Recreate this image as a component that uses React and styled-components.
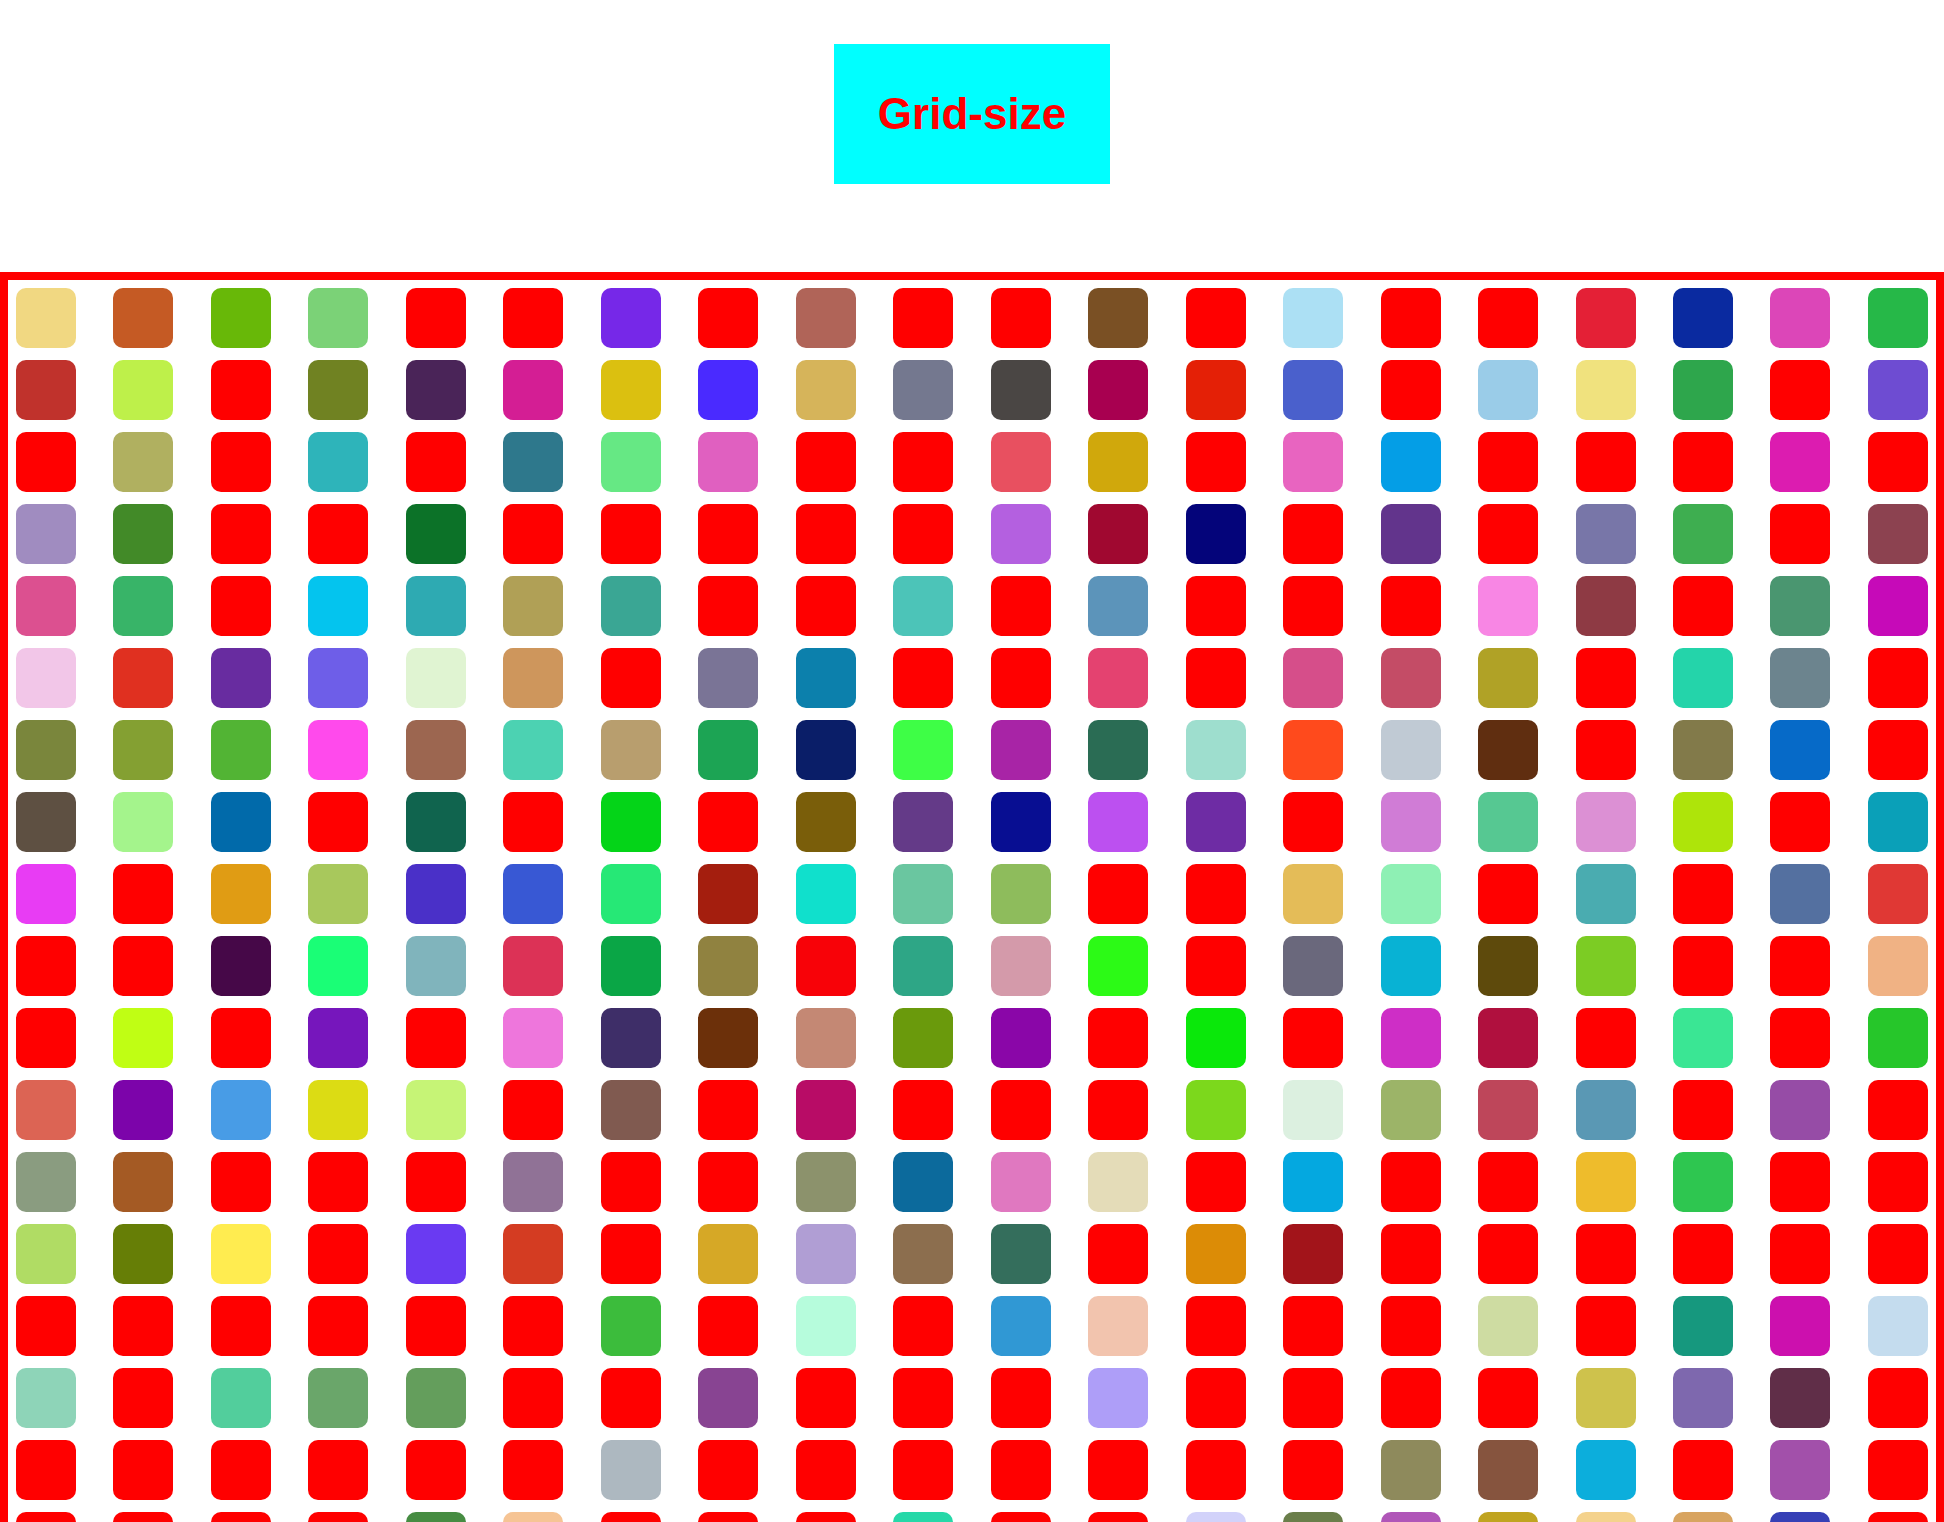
import React from "react";
import styled, { createGlobalStyle } from "styled-components";

const GlobalStyle = createGlobalStyle`
  html, body {
    margin: 0;
    padding: 0;
    background: #ffffff;
    font-family: "Liberation Sans", Arial, sans-serif;
  }
  * { box-sizing: border-box; }
`;

const R = "#ff0000";

const ROWS = [
  ["#f1d882", "#c55a24", "#68b808", "#7bd277", R, R, "#7628e8", R, "#b06458", R, R, "#7a5024", R, "#ace0f4", R, R, "#e42036", "#0a2aa0", "#dc46b8", "#26b848"],
  ["#c0322c", "#bef04a", R, "#708222", "#4a2458", "#d41e94", "#dbc010", "#4a2aff", "#d6b45a", "#74788f", "#4a4644", "#a80050", "#e42006", "#4a60cc", R, "#9acce8", "#f0e27e", "#2ea64c", R, "#6e4cd2"],
  [R, "#b0b060", R, "#2eb4ba", R, "#2e788c", "#66e884", "#e060c0", R, R, "#e85060", "#d0a80c", R, "#e864c0", "#049ee6", R, R, R, "#dc1cb0", R],
  ["#a08cc0", "#428a28", R, R, "#0c7228", R, R, R, R, R, "#b460e0", "#a00830", "#04047a", R, "#62348c", R, "#7876a8", "#3eae50", R, "#8c4250"],
  ["#dc5090", "#38b468", R, "#04c4ee", "#2eaab2", "#b0a056", "#3aa694", R, R, "#4cc4b8", R, "#5c94ba", R, R, R, "#f886e4", "#8e3a44", R, "#4a9670", "#c60ab8"],
  ["#f2c6e8", "#e03020", "#682ca0", "#6e5ee8", "#e0f4d2", "#ce965c", R, "#7a7496", "#0c80ac", R, R, "#e44270", R, "#d64e8a", "#c44c66", "#b0a226", R, "#24d4aa", "#6c848e", R],
  ["#7a863c", "#84a032", "#52b434", "#ff4aec", "#9c6650", "#4cd2b2", "#b89e6e", "#1ca454", "#0a1e68", "#3efe46", "#a824a6", "#2a6c54", "#9edece", "#ff4a1c", "#c0cad4", "#602e10", R, "#827a4a", "#066ac8", R],
  ["#5e5042", "#a4f48c", "#016aaa", R, "#10644e", R, "#04d418", R, "#7a5e0a", "#643a88", "#080e92", "#bc50f0", "#6e2ca4", R, "#d07cd6", "#56c892", "#dc90d4", "#aee40a", R, "#0aa0b8"],
  ["#e83cf4", R, "#e09c14", "#a8c85c", "#4a30c8", "#3858d4", "#26e876", "#a41e0e", "#10e0cc", "#6ac6a0", "#8ebc5c", R, R, "#e4bc58", "#8ef0b4", R, "#4aacb0", R, "#5470a0", "#e03834"],
  [R, R, "#460848", "#1afe76", "#80b4bc", "#dc3256", "#0aa646", "#908240", "#f80208", "#2ea686", "#d49aaa", "#2cfa16", R, "#6a687c", "#08b2d4", "#5e4a0c", "#7ccc24", R, R, "#f0b284"],
  [R, "#c0fe14", R, "#7616bc", R, "#ee76dc", "#3e2e68", "#6c300a", "#c48874", "#6a9a0c", "#8a06a8", R, "#0ae80a", R, "#ce2ec6", "#b0103e", R, "#3ae694", R, "#26c62a"],
  ["#dc6454", "#7c04aa", "#489ce6", "#dcdc14", "#c6f476", R, "#805a50", R, "#b80c66", R, R, R, "#7cd81c", "#dcf0e0", "#9cb468", "#be465a", "#5a98b4", R, "#964ca6", R],
  ["#8a9c80", "#a45a24", R, R, R, "#907296", R, R, "#8c926c", "#0c6a9c", "#e078c0", "#e4dcb8", R, "#04a8e0", R, R, "#eebc2c", "#2ec650", R, R],
  ["#b0dc64", "#667e06", "#ffec50", R, "#6a3af2", "#d43c22", R, "#d6a826", "#b09ed4", "#8c6e4e", "#346e5c", R, "#dc8c06", "#a2141a", R, R, R, R, R, R],
  [R, R, R, R, R, R, "#3cbc3c", R, "#b6fcdc", R, "#3098d4", "#f2c4ae", R, R, R, "#cedca2", R, "#16987e", "#cc10ae", "#c4dcee"],
  ["#8ed4b8", R, "#52ce9c", "#6aa66a", "#649e5c", R, R, "#884492", R, R, R, "#ae9ef8", R, R, R, R, "#cec24c", "#7e68ae", "#602e48", R],
  [R, R, R, R, R, R, "#adb8c0", R, R, R, R, R, R, R, "#8e8a5c", "#86543e", "#0caedc", R, "#a250aa", R],
  [R, R, R, R, "#468c42", "#f6c494", R, R, R, "#26d8a8", R, R, "#d2d2fa", "#6a7e4a", "#b056b8", "#c0a420", "#f4d28c", "#d8a460", "#3640b6", R],
  [R, "#5a8cc8", R, "#e4a0b8", R, R, "#7cba6a", R, R, "#c46a2e", R, "#4a3a8e", R, R, "#e8d46a", R, "#2a9a9a", R, R, "#b84a6a"],
];

const Page = styled.div`
  display: flex;
  flex-direction: column;
  align-items: stretch;
  width: 100%;
`;

const Header = styled.header`
  display: flex;
  justify-content: center;
  padding-top: 44px;
  padding-bottom: 88px;
`;

const Title = styled.h1`
  margin: 0;
  width: 276px;
  height: 140px;
  display: flex;
  align-items: center;
  justify-content: center;
  background: #00ffff;
  color: #ff0000;
  font-family: "Liberation Sans", Arial, sans-serif;
  font-weight: 700;
  font-size: 44px;
  line-height: 1;
`;

const Grid = styled.main`
  display: grid;
  grid-template-columns: repeat(20, 60px);
  justify-content: space-between;
  row-gap: 12px;
  padding: 8px;
  border: 8px solid #ff0000;
  width: 100%;
`;

const Cell = styled.div`
  width: 60px;
  height: 60px;
  border-radius: 10px;
  background: ${(p) => p.$color};
`;

export default function App() {
  return (
    <Page>
      <GlobalStyle />
      <Header>
        <Title>Grid-size</Title>
      </Header>
      <Grid>
        {ROWS.flatMap((row, r) =>
          row.map((c, i) => <Cell key={`${r}-${i}`} $color={c} />)
        )}
      </Grid>
    </Page>
  );
}
